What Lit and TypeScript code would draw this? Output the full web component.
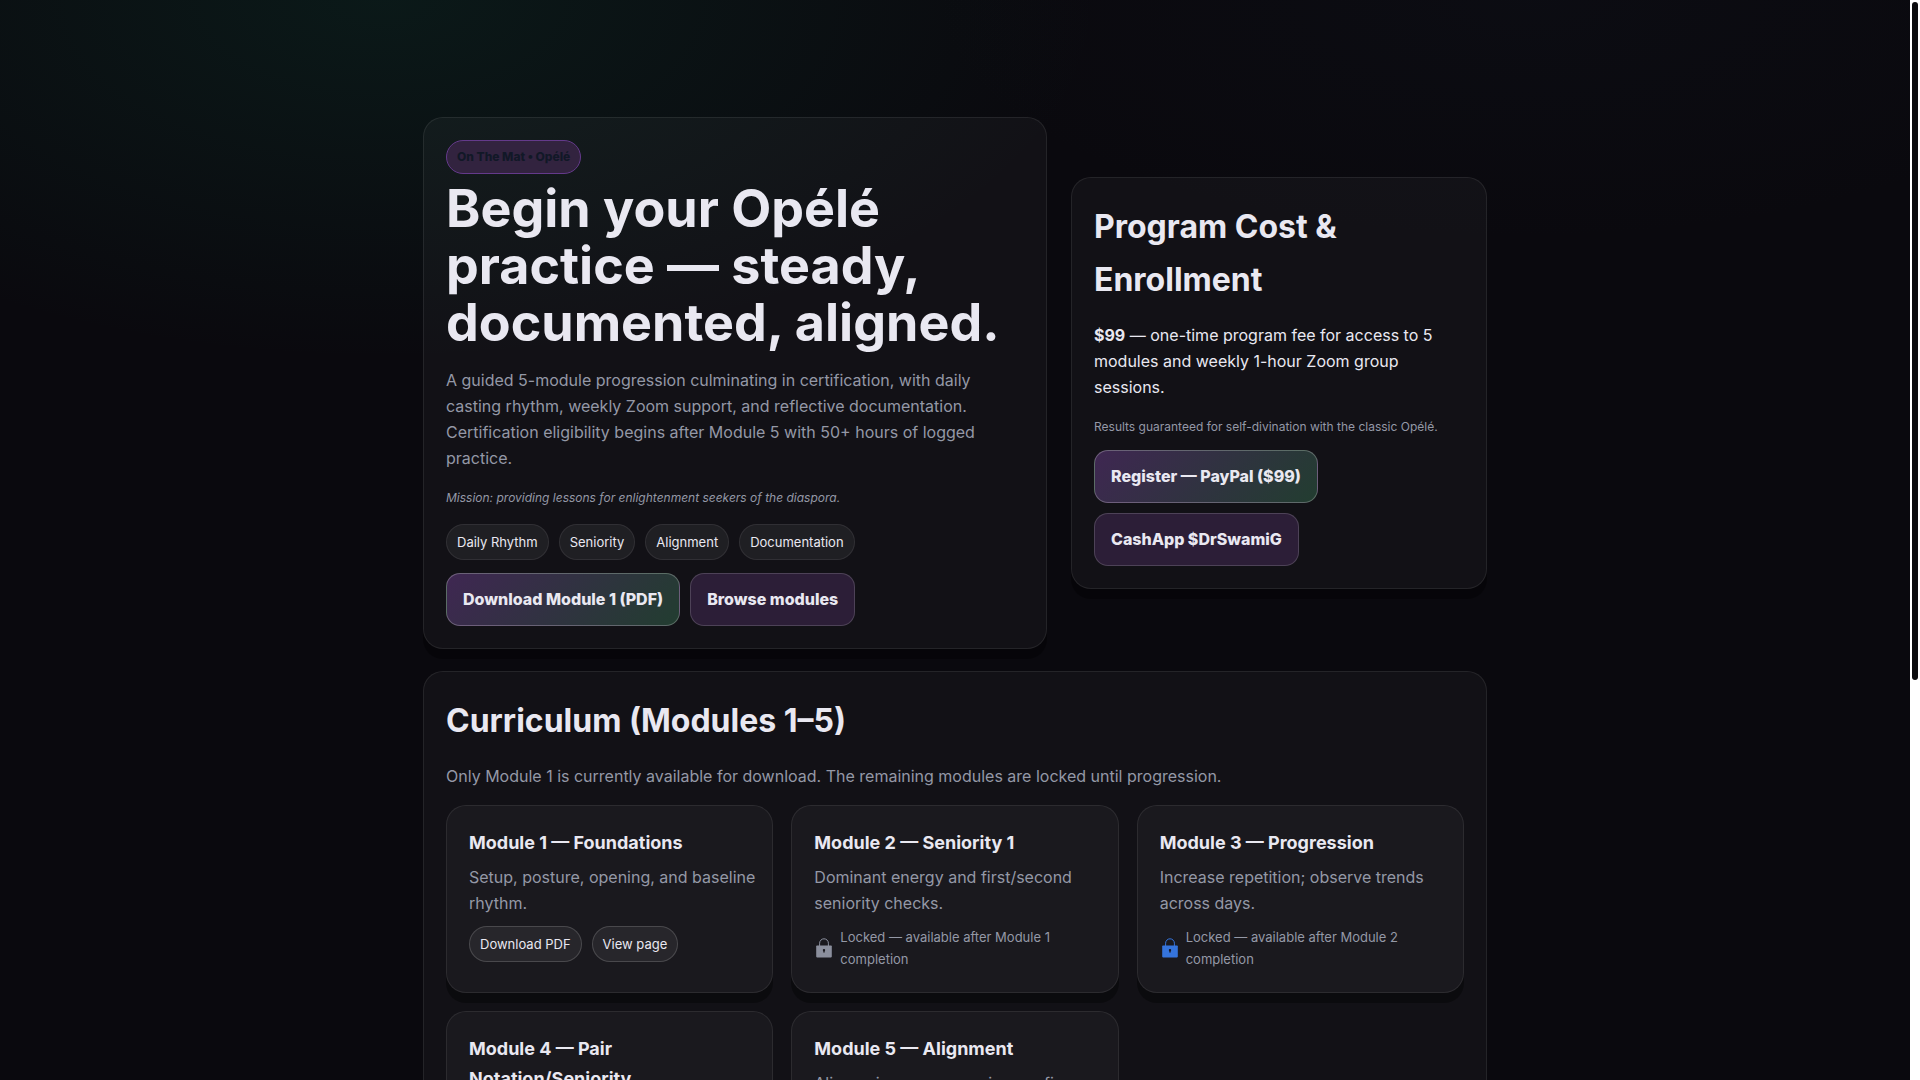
import { LitElement, html, css, svg } from "lit";
import { customElement, property } from "lit/decorators.js";

interface Module {
  title: string;
  text: string;
  lockedAfter?: string;
  tone?: "grey" | "blue";
}

const MODULES: Module[] = [
  { title: "Module 1 — Foundations", text: "Setup, posture, opening, and baseline rhythm." },
  { title: "Module 2 — Seniority 1", text: "Dominant energy and first/second seniority checks.", lockedAfter: "Module 1", tone: "grey" },
  { title: "Module 3 — Progression", text: "Increase repetition; observe trends across days.", lockedAfter: "Module 2", tone: "blue" },
  { title: "Module 4 — Pair Notation/Seniority", text: "Record pairs and seniority.", lockedAfter: "Module 3", tone: "grey" },
  { title: "Module 5 — Alignment", text: "Align pairs across sessions; refine practice.", lockedAfter: "Module 4", tone: "grey" },
];

const shared = css`
  * {
    box-sizing: border-box;
  }
  h1, h2, h3, p {
    margin: 0;
  }
  a {
    color: inherit;
    text-decoration: none;
  }
  .card {
    padding: 22px;
    border: 1px solid rgba(255, 255, 255, 0.08);
    border-radius: 20px;
    background: rgba(255, 255, 255, 0.035);
    box-shadow: 0 10px 0 rgba(0, 0, 0, 0.35);
  }
  .muted {
    color: #9498a6;
  }
  .row {
    display: flex;
    flex-wrap: wrap;
    gap: 10px;
  }
  .chip {
    padding: 6px 10px;
    border: 1px solid rgba(255, 255, 255, 0.08);
    border-radius: 18px;
    background: rgba(255, 255, 255, 0.06);
    font-size: 13px;
    line-height: 22px;
  }
`;

@customElement("module-card")
export class ModuleCard extends LitElement {
  @property({ attribute: false }) module!: Module;

  static styles = [
    shared,
    css`
      :host {
        display: grid;
      }
      .module {
        padding-right: 12px;
      }
      .title {
        font-size: 18px;
        line-height: 30px;
        font-weight: 700;
      }
      .text {
        margin-top: 6px;
      }
      .foot {
        margin-top: 10px;
      }
      .action {
        border-color: rgba(255, 255, 255, 0.16);
      }
      .locked {
        display: flex;
        align-items: center;
        gap: 6px;
        margin-top: 10px;
        font-size: 13px;
        line-height: 22px;
      }
      .note {
        padding-right: 10px;
      }
      .lock {
        flex: none;
        width: 20px;
        height: 20px;
      }
      .grey {
        color: #8b8f9d;
      }
      .blue {
        color: #3574dc;
      }
    `,
  ];

  private lock(tone: string) {
    return html`<svg class="lock ${tone}" viewBox="0 0 20 20" aria-hidden="true">
      ${svg`<path d="M5.6 8V5.2a4.4 4.4 0 0 1 8.8 0V8" fill="none" stroke="currentColor" stroke-width="1" />
      <rect x="2.2" y="7.4" width="15.6" height="12" rx="0.8" fill="currentColor" />
      <path d="M8.8 12.1a1.2 1.2 0 0 1 2.4 0c0 .5-.2.8-.5 1v1.5H9.3v-1.5c-.3-.2-.5-.5-.5-1z" fill="#17161b" />`}
    </svg>`;
  }

  render() {
    const m = this.module;
    return html`<article class="card module">
      <h3 class="title">${m.title}</h3>
      <p class="text muted">${m.text}</p>
      ${m.lockedAfter
        ? html`<div class="locked muted">${this.lock(m.tone ?? "grey")}<span class="note">Locked — available after ${m.lockedAfter} completion</span></div>`
        : html`<div class="row foot"><a class="chip action" href="#pdf">Download PDF</a><a class="chip action" href="#view">View page</a></div>`}
    </article>`;
  }
}

@customElement("app-root")
export class AppRoot extends LitElement {
  static styles = [
    shared,
    css`
      :host {
        display: flex;
        height: 100vh;
        overflow: hidden;
        color: #e9e8f1;
        font: 16px/26px Inter, "Noto Sans", sans-serif;
        background: #0a090e;
      }
      .page {
        flex: 1;
        min-width: 0;
        overflow: hidden;
        background:
          radial-gradient(1200px 600px at 20% 0%, rgba(16, 140, 100, 0.12), transparent 60%),
          radial-gradient(1000px 400px at 80% 0%, rgba(30, 50, 70, 0.08), transparent 60%),
          #0a090e;
      }
      .rail {
        flex: none;
        width: 10px;
        padding: 2px;
        background: #fff;
      }
      .thumb {
        height: 63%;
        border-radius: 3px;
        background: #0b0b0d;
      }
      .wrap {
        max-width: 1100px;
        margin: 0 auto;
        padding: 117px 18px 60px;
      }
      .hero {
        display: grid;
        grid-template-columns: 3fr 2fr;
        gap: 24px;
        align-items: center;
      }
      .badge {
        display: inline-block;
        padding: 6px 10px;
        border: 1px solid #643a8b;
        border-radius: 18px;
        background: #32233f;
        color: #111827;
        font-size: 12px;
        line-height: 20px;
        font-weight: 800;
      }
      .intro {
        display: flex;
        flex-direction: column;
        align-items: flex-start;
      }
      .headline {
        margin-top: 6px;
        font-size: 52px;
        line-height: 57px;
        font-weight: 700;
      }
      .lead {
        margin-top: 16px;
      }
      .small {
        margin-top: 17px;
        font-size: 12px;
        line-height: 20px;
      }
      .mission {
        font-style: italic;
      }
      .chips {
        margin-top: 16px;
      }
      .actions {
        margin-top: 13px;
      }
      .button {
        padding: 12px 16px;
        border: 1px solid rgba(255, 255, 255, 0.16);
        border-radius: 14px;
        background: #2c1e37;
        line-height: 27px;
        font-weight: 800;
      }
      .primary {
        border-color: rgba(255, 255, 255, 0.25);
        background: linear-gradient(135deg, #3f2752, #223d30);
      }
      .heading {
        font-size: 32px;
        line-height: 53px;
        font-weight: 700;
      }
      .section {
        margin-top: 22px;
      }
      .modules {
        display: grid;
        grid-template-columns: repeat(3, minmax(0, 1fr));
        gap: 18px;
        margin-top: 16px;
      }
    `,
  ];

  render() {
    return html`
      <main class="page">
        <div class="wrap">
          <div class="hero">
            <section class="card intro">
              <span class="badge">On The Mat • Opélé</span>
              <h1 class="headline">Begin your Opélé practice — steady, documented, aligned.</h1>
              <p class="lead muted">A guided 5-module progression culminating in certification, with daily casting rhythm, weekly Zoom support, and reflective documentation. Certification eligibility begins after Module 5 with 50+ hours of logged practice.</p>
              <p class="small mission muted">Mission: providing lessons for enlightenment seekers of the diaspora.</p>
              <div class="row chips">
                ${["Daily Rhythm", "Seniority", "Alignment", "Documentation"].map((t) => html`<span class="chip">${t}</span>`)}
              </div>
              <div class="row actions">
                <a class="button primary" href="#module-1">Download Module 1 (PDF)</a>
                <a class="button" href="#modules">Browse modules</a>
              </div>
            </section>
            <aside class="card">
              <h2 class="heading">Program Cost &amp; Enrollment</h2>
              <p class="lead"><strong>$99</strong> — one-time program fee for access to 5 modules and weekly 1-hour Zoom group sessions.</p>
              <p class="small muted">Results guaranteed for self-divination with the classic Opélé.</p>
              <div class="row actions">
                <a class="button primary" href="#paypal">Register — PayPal ($99)</a>
                <a class="button" href="#cashapp">CashApp $DrSwamiG</a>
              </div>
            </aside>
          </div>
          <section class="card section" id="modules">
            <h2 class="heading">Curriculum (Modules 1–5)</h2>
            <p class="lead muted">Only Module 1 is currently available for download. The remaining modules are locked until progression.</p>
            <div class="modules">
              ${MODULES.map((m) => html`<module-card .module=${m}></module-card>`)}
            </div>
          </section>
        </div>
      </main>
      <div class="rail" aria-hidden="true"><div class="thumb"></div></div>
    `;
  }
}
